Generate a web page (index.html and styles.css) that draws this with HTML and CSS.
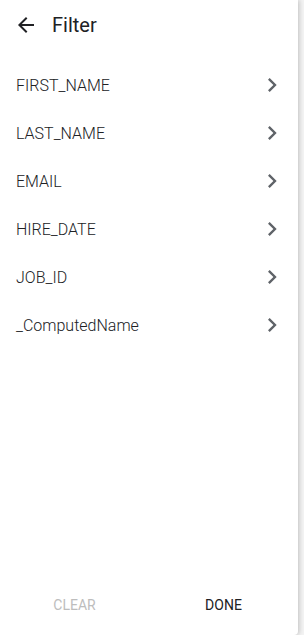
FILE: index.html
```html
<!DOCTYPE html>
<html lang="en">
<head>
    <meta charset="UTF-8">
    <meta name="viewport" content="width=device-width, initial-scale=1.0">
    <title>Filter</title>
    <link rel="stylesheet" href="styles.css">
</head>
<body>
    <div class="panel">
        <header class="panel-head">
            <svg class="back" viewBox="0 0 24 24" width="24" height="24"><path d="M20 11H7.83l5.59-5.59L12 4l-8 8 8 8 1.41-1.41L7.83 13H20v-2z"/></svg>
            <span class="title">Filter</span>
        </header>
        <ul class="fields">
            <li class="field"><span>FIRST_NAME</span><svg class="chev" viewBox="0 0 24 24" width="28" height="28"><path d="M8.59 16.59L13.17 12 8.59 7.41 10 6l6 6-6 6-1.41-1.41z"/></svg></li>
            <li class="field"><span>LAST_NAME</span><svg class="chev" viewBox="0 0 24 24" width="28" height="28"><path d="M8.59 16.59L13.17 12 8.59 7.41 10 6l6 6-6 6-1.41-1.41z"/></svg></li>
            <li class="field"><span>EMAIL</span><svg class="chev" viewBox="0 0 24 24" width="28" height="28"><path d="M8.59 16.59L13.17 12 8.59 7.41 10 6l6 6-6 6-1.41-1.41z"/></svg></li>
            <li class="field"><span>HIRE_DATE</span><svg class="chev" viewBox="0 0 24 24" width="28" height="28"><path d="M8.59 16.59L13.17 12 8.59 7.41 10 6l6 6-6 6-1.41-1.41z"/></svg></li>
            <li class="field"><span>JOB_ID</span><svg class="chev" viewBox="0 0 24 24" width="28" height="28"><path d="M8.59 16.59L13.17 12 8.59 7.41 10 6l6 6-6 6-1.41-1.41z"/></svg></li>
            <li class="field"><span>_ComputedName</span><svg class="chev" viewBox="0 0 24 24" width="28" height="28"><path d="M8.59 16.59L13.17 12 8.59 7.41 10 6l6 6-6 6-1.41-1.41z"/></svg></li>
        </ul>
        <footer class="actions">
            <button class="btn btn-clear" disabled>CLEAR</button>
            <button class="btn btn-done">DONE</button>
        </footer>
    </div>
</body>
</html>
```

FILE: styles.css
```css
html, body {
    margin: 0;
    height: 100%;
}
body {
    background-color: #f3f3f3;
    font-family: Roboto, "Liberation Sans", sans-serif;
}
.panel {
    width: 298px;
    height: 635px;
    background-color: #fff;
    box-shadow: 1px 0 5px rgba(0, 0, 0, 0.22);
    border-bottom-right-radius: 4px;
    display: flex;
    flex-direction: column;
}
.panel-head {
    height: 50px;
    display: flex;
    align-items: center;
    padding-left: 14px;
}
.back {
    fill: #202124;
}
.title {
    margin-left: 14px;
    font-size: 20px;
    color: #202124;
}
.fields {
    list-style: none;
    margin: 11px 0 0 0;
    padding: 0;
    flex: 1;
}
.field {
    height: 48px;
    display: flex;
    align-items: center;
    justify-content: space-between;
    padding: 0 12px 0 16px;
    font-size: 16px;
    font-weight: 300;
    color: #202124;
}
.chev {
    fill: #5f6368;
}
.actions {
    height: 56px;
    display: flex;
    margin-bottom: 2px;
}
.btn {
    flex: 1;
    background: none;
    border: none;
    font-family: inherit;
    font-size: 14px;
    padding: 0;
}
.btn-clear {
    color: #bdbdbd;
}
.btn-done {
    color: #202124;
}
```
